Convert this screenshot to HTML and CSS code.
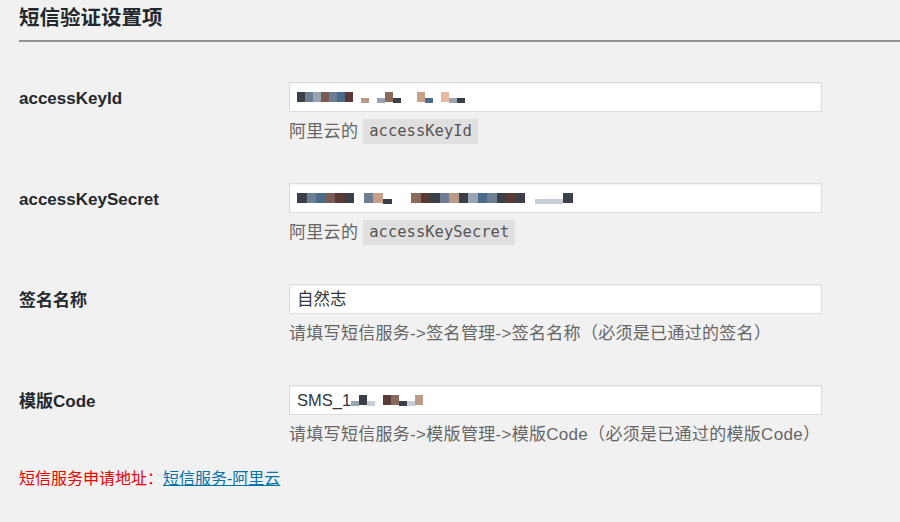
FILE: index.html
```html
<!DOCTYPE html>
<html lang="zh-CN">
<head>
<meta charset="utf-8">
<title>短信验证设置项</title>
<link rel="stylesheet" href="styles.css">
</head>
<body>
<div class="wrap">
  <h2 class="title">短信验证设置项</h2>
  <div class="form">
    <div class="row">
      <div class="label">accessKeyId</div>
      <div class="field">
        <div class="input">
          <span class="mosaic">
            <i class="m c1"></i><i class="m c2"></i><i class="m c3"></i><i class="m c4"></i><i class="m c2"></i><i class="m c5"></i><i class="m c6"></i><i class="m sp"></i><i class="m c7 sm"></i><i class="m sp"></i><i class="m c3 sm"></i><i class="m c8"></i><i class="m c1 sm"></i><i class="m sp"></i><i class="m sp"></i><i class="m c9"></i><i class="m c5 sm"></i><i class="m sp"></i><i class="m c10"></i><i class="m c3 sm"></i><i class="m c1 sm"></i>
          </span>
        </div>
        <p class="desc">阿里云的 <code>accessKeyId</code></p>
      </div>
    </div>
    <div class="row">
      <div class="label">accessKeySecret</div>
      <div class="field">
        <div class="input">
          <span class="mosaic wide">
            <i class="m c1"></i><i class="m c2"></i><i class="m c5"></i><i class="m c4"></i><i class="m c6"></i><i class="m c1"></i><i class="m sp"></i><i class="m c2"></i><i class="m c9"></i><i class="m c1 sm"></i><i class="m sp"></i><i class="m sp"></i><i class="m c8"></i><i class="m c6"></i><i class="m c1"></i><i class="m c2"></i><i class="m c7"></i><i class="m c1"></i><i class="m c3"></i><i class="m c5"></i><i class="m c2"></i><i class="m c1"></i><i class="m c6"></i><i class="m c1"></i><i class="m sp"></i><i class="m c11 sm"></i><i class="m c11 sm"></i><i class="m c11 sm"></i><i class="m c1"></i>
          </span>
        </div>
        <p class="desc">阿里云的 <code>accessKeySecret</code></p>
      </div>
    </div>
    <div class="row">
      <div class="label">签名名称</div>
      <div class="field">
        <div class="input">自然志</div>
        <p class="desc">请填写短信服务-&gt;签名管理-&gt;签名名称（必须是已通过的签名）</p>
      </div>
    </div>
    <div class="row">
      <div class="label">模版Code</div>
      <div class="field">
        <div class="input">SMS_1<span class="mosaic"><i class="m c3 sm"></i><i class="m c1"></i><i class="m c11 sm"></i><i class="m sp"></i><i class="m c6"></i><i class="m c8"></i><i class="m c1 sm"></i><i class="m c11 sm"></i><i class="m c7"></i></span></div>
        <p class="desc">请填写短信服务-&gt;模版管理-&gt;模版Code（必须是已通过的模版Code）</p>
      </div>
    </div>
  </div>
  <p class="apply"><span class="apply-label">短信服务申请地址：</span><a class="apply-link" href="#">短信服务-阿里云</a></p>
</div>
</body>
</html>
```
FILE: styles.css
```css
html, body {
  margin: 0;
  padding: 0;
  background: #f1f1f1;
}

body {
  font-family: "Liberation Sans", "Noto Sans CJK SC", sans-serif;
  color: #23282d;
  width: 900px;
  height: 522px;
  overflow: hidden;
}

.wrap {
  padding-left: 19px;
}

.title {
  margin: 0;
  padding: 4px 0 8px;
  font-size: 20.5px;
  line-height: 28px;
  font-weight: 700;
  color: #23282d;
  border-bottom: 2px solid #939393;
}

.form {
  display: flex;
  flex-direction: column;
  gap: 39px;
  padding-top: 40px;
}

.row {
  display: flex;
  align-items: flex-start;
}

.label {
  width: 270px;
  flex: none;
  font-size: 17px;
  font-weight: 700;
  line-height: 30px;
  padding-top: 2px;
}

.field {
  display: flex;
  flex-direction: column;
}

.input {
  box-sizing: border-box;
  width: 533px;
  height: 30px;
  background: #fff;
  border: 1px solid #dcdcdc;
  box-shadow: inset 0 1px 2px rgba(0, 0, 0, 0.07);
  padding: 0 7px;
  font-size: 16.5px;
  line-height: 28px;
  color: #32373c;
  display: flex;
  align-items: center;
}

.mosaic {
  display: inline-flex;
  align-items: center;
  height: 12px;
}

.m {
  display: inline-block;
  width: 8px;
  height: 10px;
}

.wide .m { width: 9.5px; }

.m.sm { height: 5px; align-self: flex-end; }
.m.sp { background: transparent; }
.c1 { background: #3a3f48; }
.c2 { background: #6d7e92; }
.c3 { background: #9aa4b0; }
.c4 { background: #7a5a54; }
.c5 { background: #4c6a8a; }
.c6 { background: #5a3a34; }
.c7 { background: #b99a86; }
.c8 { background: #8a6a5a; }
.c9 { background: #c8a08a; }
.c10 { background: #e8b8a0; }
.c11 { background: #c8ced6; }

.desc {
  margin: 7px 0 0;
  height: 25px;
  font-size: 17px;
  line-height: 25px;
  color: #666;
  white-space: nowrap;
  letter-spacing: 0.3px;
}

.desc code {
  display: inline-block;
  vertical-align: top;
  font-family: "DejaVu Sans Mono", "Liberation Mono", monospace;
  font-size: 15.5px;
  line-height: 25px;
  padding: 0 6px;
  background: #e0e0e0;
  color: #555;
  letter-spacing: 0;
}

.apply {
  margin: 20px 0 0;
  font-size: 16px;
  line-height: 24px;
}

.apply-label {
  color: #ee0000;
}

.apply-link {
  color: #0073aa;
  text-decoration: underline;
}
```
